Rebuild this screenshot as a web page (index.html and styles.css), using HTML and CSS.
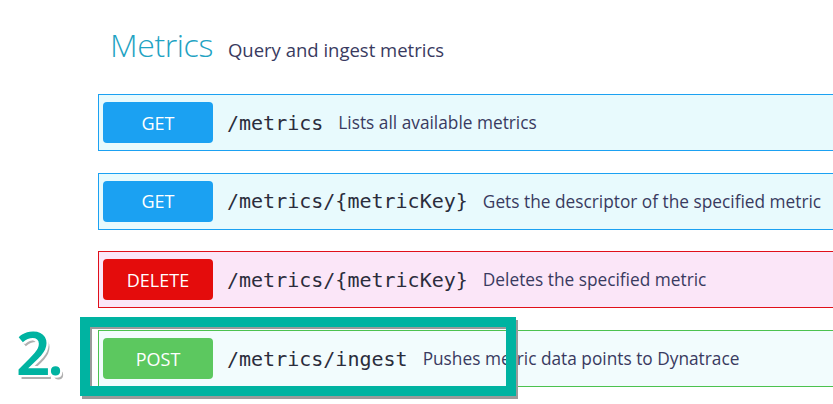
FILE: index.html
```html
<!DOCTYPE html>
<html lang="en">
<head>
<meta charset="utf-8">
<title>Metrics</title>
<link rel="stylesheet" href="styles.css">
</head>
<body>
<div class="page">
  <h2 class="tag">
    <span class="tag-name">Metrics</span>
    <span class="tag-desc">Query and ingest metrics</span>
  </h2>
  <div class="ops">
    <div class="op op-get">
      <span class="method">GET</span>
      <span class="path">/metrics</span>
      <span class="desc">Lists all available metrics</span>
    </div>
    <div class="op op-get">
      <span class="method">GET</span>
      <span class="path">/metrics/{metricKey}</span>
      <span class="desc">Gets the descriptor of the specified metric</span>
    </div>
    <div class="op op-delete">
      <span class="method">DELETE</span>
      <span class="path">/metrics/{metricKey}</span>
      <span class="desc">Deletes the specified metric</span>
    </div>
    <div class="op op-post">
      <span class="method">POST</span>
      <span class="path">/metrics/ingest</span>
      <span class="desc">Pushes metric data points to Dynatrace</span>
    </div>
  </div>
  <div class="step-label">2.</div>
  <div class="highlight"></div>
</div>
</body>
</html>
```
FILE: styles.css
```css
html, body {
  margin: 0;
  padding: 0;
  background: #ffffff;
  overflow: hidden;
}

.page {
  position: relative;
  width: 833px;
  height: 404px;
  padding: 23px 0 0 98px;
  box-sizing: border-box;
  font-family: "Open Sans", "Noto Sans", sans-serif;
}

.tag {
  margin: 0 0 24px 12px;
  height: 47px;
  display: flex;
  align-items: baseline;
  gap: 15px;
  font-weight: normal;
}

.tag-name {
  font-size: 32px;
  font-weight: 300;
  color: #1fa3c3;
  letter-spacing: -0.4px;
}

.tag-desc {
  font-size: 18.5px;
  color: #393a60;
}

.ops {
  display: flex;
  flex-direction: column;
  gap: 21.7px;
  margin-right: -30px;
}

.op {
  display: flex;
  align-items: center;
  height: 57px;
  box-sizing: border-box;
  padding: 0 4px;
  border: 1px solid;
}

.op-get {
  background: #e8fafd;
  border-color: #1ba1f2;
}

.op-delete {
  background: #fbe6f8;
  border-color: #e0101a;
}

.op-post {
  background: #f2fcfd;
  border-color: #4cc24f;
}

.method {
  flex: none;
  width: 110px;
  height: 41px;
  border-radius: 4px;
  display: flex;
  align-items: center;
  justify-content: center;
  color: #ffffff;
  font-size: 18px;
}

.op-get .method { background: #1ba1f2; }
.op-delete .method { background: #e40c0c; }
.op-post .method { background: #5cc85f; }

.path {
  margin-left: 14px;
  font-family: "DejaVu Sans Mono", "Liberation Mono", monospace;
  font-size: 20px;
  color: #2b2d3c;
}

.desc {
  margin-left: 15px;
  font-size: 17.3px;
  color: #393a60;
  white-space: nowrap;
}

.highlight {
  position: absolute;
  left: 80px;
  top: 317px;
  width: 436px;
  height: 79px;
  box-sizing: border-box;
  border: 10px solid #00b3a1;
  box-shadow: 2px 3px 0 #9a9a9a, inset 2px 2px 0 #9a9a9a;
}

.step-label {
  position: absolute;
  left: 16px;
  top: 312px;
  font-family: "Noto Sans", "DejaVu Sans", sans-serif;
  font-size: 60px;
  font-weight: 600;
  line-height: 80px;
  color: #00b3a1;
  letter-spacing: -3px;
  text-shadow:
    -2px -2px 0 #ffffff, 2px -2px 0 #ffffff, -2px 2px 0 #ffffff, 2px 2px 0 #ffffff,
    0 -2px 0 #ffffff, 0 2px 0 #ffffff, -2px 0 0 #ffffff, 2px 0 0 #ffffff,
    3px 4px 0 #b0b0b0;
}
```
